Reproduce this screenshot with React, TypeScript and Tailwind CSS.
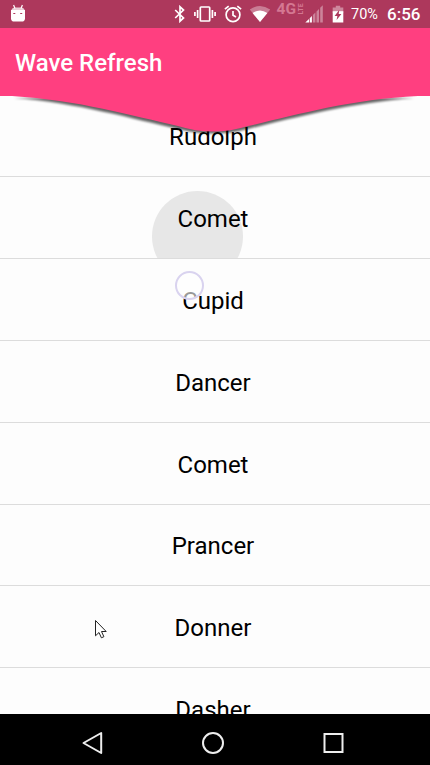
import React from "react";

const rows = [
  { name: "Rudolph", size: "h-[81px] pb-px" },
  { name: "Comet", size: "h-[82px]" },
  { name: "Cupid", size: "h-[82px]" },
  { name: "Dancer", size: "h-[82px]" },
  { name: "Comet", size: "h-[82px]" },
  { name: "Prancer", size: "h-[81px] pb-px" },
  { name: "Donner", size: "h-[82px]" },
  { name: "Dasher", size: "h-[82px]" },
];

function AndroidIcon() {
  return (
    <svg className="ml-[10px]" width="16" height="20" viewBox="0 0 16 20" fill="#fff">
      <path d="M3.600 1 5 4.500M12.400 1 11 4.500" stroke="#fff" strokeWidth="1.200" />
      <path d="M1.500 6Q2 3.500 5 3.500h6q3 0 3.500 2.500z" fillOpacity=".75" />
      <path d="M1 6h14v8.200q0 3.400-3.400 3.400H4.400Q1 17.600 1 14.200z" />
      <path d="M3.300 9.500h2M10.200 9.500h2" stroke="#ad385c" strokeWidth="1.200" />
    </svg>
  );
}

function BluetoothIcon() {
  return (
    <svg className="w-[12px]" width="12" height="18" viewBox="0 0 12 18" fill="none" stroke="#fff" strokeWidth="1.700">
      <path d="m1.200 5 8.300 7.900L6 16.200V1.800l3.500 3.300L1.200 13" />
    </svg>
  );
}

function VibrateIcon() {
  return (
    <svg className="ml-[8px]" width="22" height="18" viewBox="0 0 22 18" fill="none" stroke="#fff" strokeWidth="1.700">
      <rect x="6.300" y="2" width="9.400" height="14" rx=".8" />
      <path d="M3.600 5v8M.9 7v4M18.400 5v8M21.100 7v4" />
    </svg>
  );
}

function AlarmIcon() {
  return (
    <svg className="ml-[8px]" width="18" height="18" viewBox="0 0 18 18" fill="none" stroke="#fff" strokeWidth="1.700">
      <circle cx="9" cy="9.800" r="6.900" />
      <path d="m.9 4.200 3.800-3.100m8.600 0 3.800 3.100M9 6v4.300l3 1.800" />
    </svg>
  );
}

function WifiIcon() {
  return (
    <svg className="ml-[7px]" width="22" height="18" viewBox="0 0 22 18">
      <path d="M.8 4.600Q11-2.800 21.200 4.600L11 17z" fill="#fff" fillOpacity=".35" />
      <path d="M3.600 8Q11 2.800 18.400 8L11 17z" fill="#fff" />
    </svg>
  );
}

function NetworkLabel() {
  return (
    <svg className="ml-[5px] overflow-visible" width="28" height="20" viewBox="0 0 28 20" fill="#d47792">
      <text x="0.500" y="10" fontSize="14.500" fontWeight="700" fontFamily="Roboto, sans-serif" textLength="19.500" lengthAdjust="spacingAndGlyphs">
        4G
      </text>
      <text transform="translate(26.500 10.500) rotate(-90)" fontSize="7.500" fontWeight="700" fontFamily="Roboto, sans-serif" textLength="11" lengthAdjust="spacingAndGlyphs">
        LTE
      </text>
    </svg>
  );
}

function SignalIcon() {
  return (
    <svg className="ml-px" width="19" height="18" viewBox="0 0 19 18">
      <path d="M.3 17.500 4 13.900v3.600zM4.700 13.200l2.200-2.200v6.500H4.700z" fill="#fff" />
      <path d="M7.900 10 10.400 7.500v10H7.900zM11.500 6.400 14 4v13.500h-2.500zM15.200 2.800 17.800.3v17.200h-2.600z" fill="#fff" fillOpacity=".38" />
    </svg>
  );
}

function BatteryIcon() {
  return (
    <svg className="ml-[8px]" width="12" height="18" viewBox="0 0 12 18">
      <path d="M.7 2.500h3.100V.8h4.400v1.700h3.100V8H.7z" fill="#fff" fillOpacity=".4" />
      <path d="M.7 6.200h10.600v11.300H.7z" fill="#fff" />
      <path d="M7.300 4.800 2.600 11h2.800l-.8 4 4.800-6H6.700z" fill="#ad385c" />
    </svg>
  );
}

export default function App() {
  return (
    <div className="flex h-[765px] w-[430px] flex-col overflow-hidden bg-[#fdfdfd] font-['Roboto',sans-serif]">
      <div className="flex h-7 shrink-0 items-center bg-[#ad385c] text-white">
        <AndroidIcon />
        <div className="ml-[148px] flex items-center">
          <BluetoothIcon />
          <VibrateIcon />
          <AlarmIcon />
          <WifiIcon />
          <NetworkLabel />
          <SignalIcon />
          <BatteryIcon />
        </div>
        <span className="ml-[7px] w-[28px] pt-px text-[14.500px] whitespace-nowrap">70%</span>
        <span className="ml-[8px] pt-px text-[17px] font-medium whitespace-nowrap">6:56</span>
      </div>

      <header className="relative z-10 flex h-[68px] shrink-0 items-center bg-[#ff3f80] pt-px pl-[15px]">
        <h1 className="text-[24px] font-medium text-white">Wave Refresh</h1>
        <svg className="absolute top-[68px] left-0" width="430" height="42" viewBox="0 0 430 42">
          <defs>
            <filter id="edge" x="-5%" y="-10%" width="110%" height="130%">
              <feGaussianBlur stdDeviation="1" />
            </filter>
          </defs>
          <path
            d="M14 0C78 5 133 21 178 31Q213 40 248 31C293 20 350 5 414 0z"
            fill="#000"
            fillOpacity=".6"
            filter="url(#edge)"
            transform="translate(0 2)"
          />
          <path d="M0-1H430V0H418C350 3 293 20 248 30Q213 41 178 30C133 20 78 4 12 0H0z" fill="#ff3f80" />
        </svg>
      </header>

      <main className="relative min-h-0 flex-1 overflow-hidden text-[24px] text-black">
        {rows.map((row, i) => (
          <div
            key={i}
            className={`relative flex items-center justify-center overflow-hidden border-b border-[#dcdcdc] ${row.size}`}
          >
            {i === 1 && <span className="absolute top-[14px] left-[152px] size-[91px] rounded-full bg-[#e7e7e7]" />}
            <span className="relative pt-[3px] pr-[4px]">{row.name}</span>
          </div>
        ))}
        <span className="absolute top-[175px] left-[175px] size-[29px] rounded-full border-2 border-[#d9d3ef] bg-white/60" />
        <svg className="absolute top-[523px] left-[94px]" width="14" height="21" viewBox="0 0 14 21">
          <path
            d="M1.500 1.500v15.300l3.500-3.300 2.400 5.300 2.500-1.100-2.400-5.200h4.700z"
            fill="#fff"
            stroke="#222"
          />
        </svg>
      </main>

      <nav className="flex h-[51px] shrink-0 items-center bg-black pt-[7px] pl-[81px]">
        <svg width="24" height="26" viewBox="0 0 24 26" fill="none" stroke="#eee" strokeWidth="2" strokeLinejoin="round">
          <path d="M2.500 13 20.200 3v20z" />
        </svg>
        <svg className="ml-[96px]" width="24" height="26" viewBox="0 0 24 26" fill="none" stroke="#eee" strokeWidth="2">
          <circle cx="12" cy="13" r="10" />
        </svg>
        <svg className="ml-[97px]" width="24" height="26" viewBox="0 0 24 26" fill="none" stroke="#eee" strokeWidth="2">
          <rect x="2.500" y="4" width="18" height="18" />
        </svg>
      </nav>
    </div>
  );
}
